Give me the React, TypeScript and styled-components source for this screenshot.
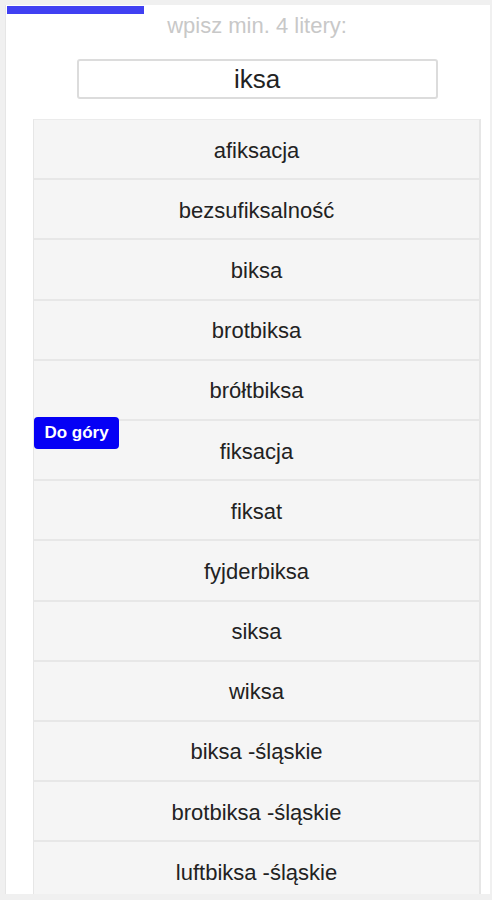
import React from "react";
import styled, { createGlobalStyle } from "styled-components";

const words = [
  "afiksacja",
  "bezsufiksalność",
  "biksa",
  "brotbiksa",
  "brółtbiksa",
  "fiksacja",
  "fiksat",
  "fyjderbiksa",
  "siksa",
  "wiksa",
  "biksa -śląskie",
  "brotbiksa -śląskie",
  "luftbiksa -śląskie",
];

const GlobalStyle = createGlobalStyle`
  html, body {
    margin: 0;
    padding: 0;
    background: #f0f0f0;
    font-family: "Liberation Sans", Arial, sans-serif;
  }
`;

const Page = styled.div`
  padding: 5px 2px 4px 5px;
`;

const Panel = styled.div`
  position: relative;
  height: 889px;
  overflow: hidden;
  background: #fff;
  border-left: 1px solid #e6e6e6;
  padding: 0 9px 0 27px;
`;

const Progress = styled.div`
  position: absolute;
  left: 1px;
  top: 1px;
  width: 137px;
  height: 8px;
  background: #4040f2;
`;

const Label = styled.div`
  padding-top: 8px;
  text-align: center;
  font-size: 22px;
  line-height: 25px;
  color: #c8c8c8;
`;

const SearchInput = styled.input`
  display: block;
  box-sizing: border-box;
  width: 361px;
  height: 40px;
  margin: 21px auto 0;
  border: 2px solid #dcdcdc;
  border-radius: 3px;
  background: #fff;
  text-align: center;
  font-family: "Liberation Sans", Arial, sans-serif;
  font-size: 26px;
  color: #222;
  outline: none;
`;

const List = styled.ul`
  list-style: none;
  margin: 20px 0 0;
  padding: 0;
  border-top: 1px solid #ebebeb;
  border-left: 1px solid #e6e6e6;
  border-right: 2px solid #e6e6e6;
  background: #f5f5f5;
`;

const Row = styled.li`
  box-sizing: border-box;
  height: 60.2px;
  padding-top: 3px;
  border-bottom: 2px solid #e7e7e7;
  display: flex;
  align-items: center;
  justify-content: center;
  font-size: 22px;
  color: #222;
`;

const TopButton = styled.button`
  position: fixed;
  left: 34px;
  top: 417px;
  width: 85px;
  height: 32px;
  border: none;
  border-radius: 4px;
  background: #0500f5;
  color: #fff;
  font-family: "Liberation Sans", Arial, sans-serif;
  font-weight: bold;
  font-size: 17px;
  padding: 0;
  cursor: pointer;
`;

export default function App() {
  return (
    <Page>
      <GlobalStyle />
      <Panel>
        <Progress />
        <Label>wpisz min. 4 litery:</Label>
        <SearchInput defaultValue="iksa" />
        <List>
          {words.map((w) => (
            <Row key={w}>{w}</Row>
          ))}
        </List>
      </Panel>
      <TopButton>Do góry</TopButton>
    </Page>
  );
}
